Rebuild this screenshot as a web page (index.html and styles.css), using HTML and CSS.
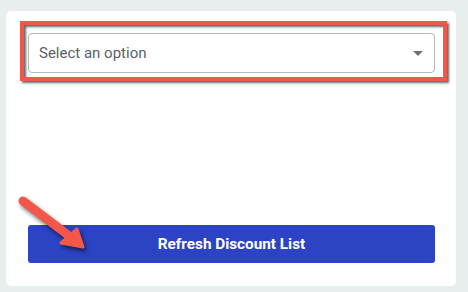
FILE: index.html
```html
<!DOCTYPE html>
<html lang="en">
<head>
  <meta charset="UTF-8">
  <meta name="viewport" content="width=device-width, initial-scale=1">
  <title>Discounts</title>
  <link rel="stylesheet" href="styles.css">
</head>
<body>
  <div class="card">
    <div class="select-wrap">
      <div class="select">
        <span>Select an option</span>
        <span class="caret"></span>
      </div>
      <div class="highlight"></div>
    </div>

    <button class="refresh">Refresh Discount List</button>

    <svg class="pointer" width="80" height="60" viewBox="0 0 80 60">
      <line x1="7" y1="5" x2="52" y2="39" stroke="#f4574a" stroke-width="9" stroke-linecap="round"/>
      <polygon points="45,47 61,33 67,51" fill="#f4574a" stroke="#f4574a" stroke-width="3" stroke-linejoin="round"/>
    </svg>
  </div>
</body>
</html>
```

FILE: styles.css
```css
body {
  margin: 0;
  background: #e8eded;
  font-family: Roboto, 'Liberation Sans', sans-serif;
}

.card {
  position: relative;
  box-sizing: border-box;
  margin: 11px 0 0 6px;
  width: 450px;
  height: 275px;
  padding: 22px 21px 23px 22px;
  background: #fff;
  border-radius: 5px;
  display: flex;
  flex-direction: column;
}

.select-wrap {
  position: relative;
}

.select {
  box-sizing: border-box;
  height: 40px;
  border: 1px solid #b4b8be;
  border-radius: 4px;
  padding: 0 10px 0 10px;
  display: flex;
  align-items: center;
  justify-content: space-between;
  color: #5b606b;
  font-size: 15px;
}

.caret {
  width: 0;
  height: 0;
  border-left: 5px solid transparent;
  border-right: 5px solid transparent;
  border-top: 5px solid #6b6f78;
  margin-right: 1px;
}

.highlight {
  position: absolute;
  top: -12px;
  left: -8px;
  right: -12px;
  bottom: -8px;
  border: 4px solid #f4574a;
  filter: drop-shadow(2px 2px 1px rgba(0, 0, 0, 0.6));
}

.refresh {
  margin-top: auto;
  height: 38px;
  border: 0;
  border-radius: 3px;
  background: #2c44c4;
  color: #fff;
  font-family: Roboto, 'Liberation Sans', sans-serif;
  font-size: 15.3px;
  font-weight: bold;
  cursor: pointer;
}

.pointer {
  position: absolute;
  left: 10px;
  top: 185px;
  filter: drop-shadow(2px 3px 2px rgba(0, 0, 0, 0.55));
}
```
